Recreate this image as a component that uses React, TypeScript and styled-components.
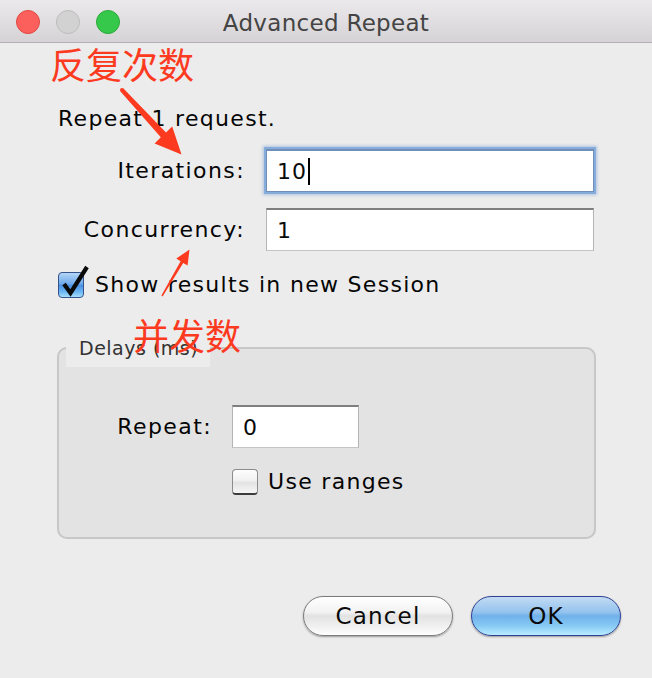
import React from "react";
import styled, { createGlobalStyle, css } from "styled-components";

const UI_FONT = `"DejaVu Sans", "Noto Sans CJK SC", sans-serif`;

const GlobalStyle = createGlobalStyle`
  html, body {
    margin: 0;
    padding: 0;
    background: #ececec;
  }
  body {
    font-family: ${UI_FONT};
  }
`;

const Checkbox = ({ checked }: { checked?: boolean }) => (
  <SCheck $checked={!!checked}>
    {checked && (
      <STick viewBox="0 0 34 34" width="34" height="34">
        <path
          d="M6 19 L12.5 28 L29 2"
          fill="none"
          stroke="#0a0a0a"
          strokeWidth="4.2"
          strokeLinejoin="miter"
          strokeLinecap="butt"
        />
      </STick>
    )}
  </SCheck>
);

const Field = ({
  value,
  focused,
  caret,
}: {
  value: string;
  focused?: boolean;
  caret?: boolean;
}) => (
  <SField $focused={!!focused}>
    {value}
    {caret && <SCaret />}
  </SField>
);

export default function App() {
  return (
    <SWindow>
      <GlobalStyle />
      <STitleBar>
        <SLights>
          <SLight $fill="#fc605c" $edge="#e0483f" />
          <SLight $fill="#d2d2d2" $edge="#bdbdbd" />
          <SLight $fill="#35c84b" $edge="#2aa93b" />
        </SLights>
        <STitle>Advanced Repeat</STitle>
        <span />
      </STitleBar>

      <SBody>
        <SText>Repeat 1 request.</SText>

        <SForm>
          <SLabel>Iterations:</SLabel>
          <Field value="10" focused caret />
          <SLabel>Concurrency:</SLabel>
          <Field value="1" />
        </SForm>

        <SCheckRow>
          <Checkbox checked />
          <SText>Show results in new Session</SText>
        </SCheckRow>

        <SGroup>
          <SLegend>Delays (ms)</SLegend>
          <SGroupGrid>
            <SLabel>Repeat:</SLabel>
            <Field value="0" />
            <span />
            <SCheckRow $tight>
              <Checkbox />
              <SText>Use ranges</SText>
            </SCheckRow>
          </SGroupGrid>
        </SGroup>

        <SButtons>
          <SButton>Cancel</SButton>
          <SButton $primary>OK</SButton>
        </SButtons>
      </SBody>

      <SAnnotations>
        <SNote $x={50} $y={45}>反复次数</SNote>
        <SNote $x={133} $y={316}>并发数</SNote>
        <SArrows width="652" height="678" viewBox="0 0 652 678">
          <polygon
            fill="#fc3a1f"
            points="120.5,91.4 160.8,137.3 154.6,143.5 181.5,154.5 172.2,126.5 166,132.5 123.5,88.6"
          />
          <circle cx="122" cy="90" r="2" fill="#fc3a1f" />
          <polygon
            fill="#fc3a1f"
            points="162.6,296.4 183.2,262.9 187.6,265.5 189.5,249.5 176.3,258.6 180.6,261.3 161.4,295.6"
          />
        </SArrows>
      </SAnnotations>
    </SWindow>
  );
}

const SWindow = styled.div`
  position: relative;
  width: 652px;
  height: 678px;
  background: #ececec;
  overflow: hidden;
  font-family: ${UI_FONT};
  color: #050505;
`;

const STitleBar = styled.div`
  height: 42px;
  display: grid;
  grid-template-columns: 1fr auto 1fr;
  align-items: center;
  background: linear-gradient(#ebe9eb, #d5d3d5);
  border-bottom: 1px solid #b2b0b2;
`;

const SLights = styled.div`
  display: flex;
  gap: 16px;
  padding-left: 16px;
  padding-top: 2px;
`;

const SLight = styled.span<{ $fill: string; $edge: string }>`
  width: 24px;
  height: 24px;
  box-sizing: border-box;
  border-radius: 50%;
  background: ${({ $fill }) => $fill};
  border: 1px solid ${({ $edge }) => $edge};
`;

const STitle = styled.div`
  padding-top: 3px;
  font-size: 23px;
  letter-spacing: 0.3px;
  color: #444444;
  line-height: 26px;
`;

const SBody = styled.div`
  padding: 64px 31px 0 58px;
  display: flex;
  flex-direction: column;
  align-items: flex-start;
`;

const SText = styled.div`
  font-size: 22px;
  line-height: 24px;
  letter-spacing: 1.3px;
  white-space: nowrap;
`;

const SForm = styled.div`
  margin-top: 18px;
  display: grid;
  grid-template-columns: 187px 328px;
  column-gap: 21px;
  row-gap: 16px;
  align-items: center;
`;

const SLabel = styled.div`
  font-size: 22px;
  line-height: 24px;
  letter-spacing: 1.4px;
  text-align: right;
  white-space: nowrap;
`;

const SField = styled.div<{ $focused: boolean }>`
  height: 43px;
  box-sizing: border-box;
  display: flex;
  align-items: center;
  padding: 0 10px;
  background: #ffffff;
  border: 1px solid #c4c4c4;
  border-top: 2px solid #7f7f7f;
  border-left-color: #b4b4b4;
  border-right-color: #b4b4b4;
  font-size: 22px;
  letter-spacing: 1px;
  color: #0a0a0a;
  ${({ $focused }) =>
    $focused &&
    css`
      border-color: #6f8fb9;
      box-shadow: 0 0 0 2px #86acdc, 0 0 3px 3px rgba(120, 160, 215, 0.55);
    `}
`;

const SCaret = styled.span`
  width: 2px;
  height: 27px;
  margin-left: 1px;
  background: #000000;
`;

const SCheckRow = styled.div<{ $tight?: boolean }>`
  margin-top: ${({ $tight }) => ($tight ? "0" : "21px")};
  display: flex;
  align-items: center;
  gap: ${({ $tight }) => ($tight ? "10px" : "11px")};
`;

const SCheck = styled.span<{ $checked: boolean }>`
  position: relative;
  width: 26px;
  height: 26px;
  box-sizing: border-box;
  border-radius: 4px;
  flex: none;
  ${({ $checked }) =>
    $checked
      ? css`
          border: 1px solid #34528c;
          background: linear-gradient(
            #b4d6f6 0%,
            #6ea9ea 45%,
            #4d91e4 52%,
            #6fb8f4 80%,
            #a6defc 100%
          );
        `
      : css`
          border: 1px solid #8c8c8c;
          border-bottom: 2px solid #3c3c3c;
          background: linear-gradient(
            #fdfdfd 0%,
            #f1f1f1 45%,
            #e3e3e3 55%,
            #f6f6f6 100%
          );
        `}
`;

const STick = styled.svg`
  position: absolute;
  left: -1px;
  top: -8px;
  overflow: visible;
`;

const SGroup = styled.fieldset`
  margin: 37px 0 0 -1px;
  padding: 0 0 42px 0;
  width: 539px;
  min-width: 0;
  box-sizing: border-box;
  border: 2px solid #c7c7c7;
  border-radius: 10px;
  background: #e3e3e3;
`;

const SLegend = styled.legend`
  margin-left: 7px;
  padding: 2px 12px 2px 13px;
  font-size: 19px;
  line-height: 22px;
  letter-spacing: 0.5px;
  color: #333333;
  background: #ececec;
  box-shadow: 0 6px 0 #ececec;
`;

const SGroupGrid = styled.div`
  margin-top: 44px;
  display: grid;
  grid-template-columns: 153px 127px;
  column-gap: 20px;
  row-gap: 21px;
  align-items: center;
`;

const SButtons = styled.div`
  align-self: stretch;
  margin-top: 57px;
  display: flex;
  justify-content: flex-end;
  gap: 18px;
`;

const SButton = styled.button<{ $primary?: boolean }>`
  width: 150px;
  height: 40px;
  box-sizing: border-box;
  border-radius: 20px;
  font-family: ${UI_FONT};
  font-size: 23px;
  letter-spacing: 1.2px;
  color: #0a0a0a;
  padding: 0;
  cursor: pointer;
  box-shadow: 0 1px 2px rgba(0, 0, 0, 0.35);
  ${({ $primary }) =>
    $primary
      ? css`
          border: 1.5px solid #2f3f93;
          background: linear-gradient(
            #c3dbf3 0%,
            #94c3ee 40%,
            #70b1ea 50%,
            #86c9f4 75%,
            #b9ecff 100%
          );
        `
      : css`
          border: 1.5px solid #7b7b7b;
          background: linear-gradient(
            #ffffff 0%,
            #f2f2f2 40%,
            #e2e2e2 50%,
            #f2f2f2 80%,
            #ffffff 100%
          );
        `}
`;

const SAnnotations = styled.div`
  position: absolute;
  inset: 0;
  pointer-events: none;
`;

const SNote = styled.div<{ $x: number; $y: number }>`
  position: absolute;
  left: ${({ $x }) => $x}px;
  top: ${({ $y }) => $y}px;
  font-family: "Noto Sans CJK SC", sans-serif;
  font-size: 36px;
  line-height: 1;
  color: #fc3a1f;
  white-space: nowrap;
`;

const SArrows = styled.svg`
  position: absolute;
  left: 0;
  top: 0;
`;
